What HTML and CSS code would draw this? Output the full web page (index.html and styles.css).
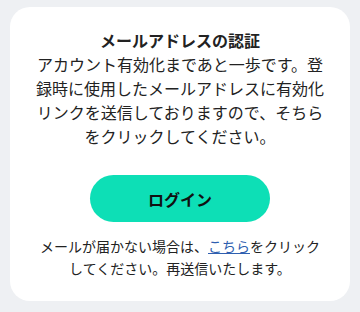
FILE: index.html
```html
<!DOCTYPE html>
<html lang="ja">

<head>
    <meta charset="UTF-8">
    <meta name="viewport" content="width=device-width, initial-scale=1.0">
    <title>メールアドレスの認証</title>
    <link rel="stylesheet" href="styles.css">
</head>

<body>
    <div class="card">
        <h1 class="title">メールアドレスの認証</h1>
        <p class="message">アカウント有効化まであと一歩です。登録時に使用したメールアドレスに有効化リンクを送信しておりますので、そちらをクリックしてください。</p>
        <button class="login-btn" type="button">ログイン</button>
        <p class="note">メールが届かない場合は、<a href="#">こちら</a>をクリックしてください。再送信いたします。</p>
    </div>
</body>

</html>
```

FILE: styles.css
```css
body {
    margin: 0;
    background: #eef0f3;
    font-family: "Noto Sans CJK JP", "Noto Sans", sans-serif;
    color: #222;
}

.card {
    margin: 7px 10px 0;
    height: 294px;
    box-sizing: border-box;
    background: #fff;
    border-radius: 20px;
    padding: 21px 24px 0;
    display: flex;
    flex-direction: column;
    align-items: center;
    text-align: center;
}

.title {
    margin: 0;
    font-size: 16px;
    font-weight: 700;
    line-height: 24px;
}

.message {
    margin: 0;
    font-size: 16px;
    line-height: 24px;
}

.login-btn {
    margin-top: 27px;
    width: 180px;
    height: 47px;
    border: none;
    border-radius: 24px;
    background: #0ddfb6;
    color: #111;
    font-family: inherit;
    font-size: 16px;
    font-weight: 700;
}

.note {
    margin: 13px 0 0;
    font-size: 14px;
    line-height: 22px;
}

.note a {
    color: #2f5fb0;
}
```
